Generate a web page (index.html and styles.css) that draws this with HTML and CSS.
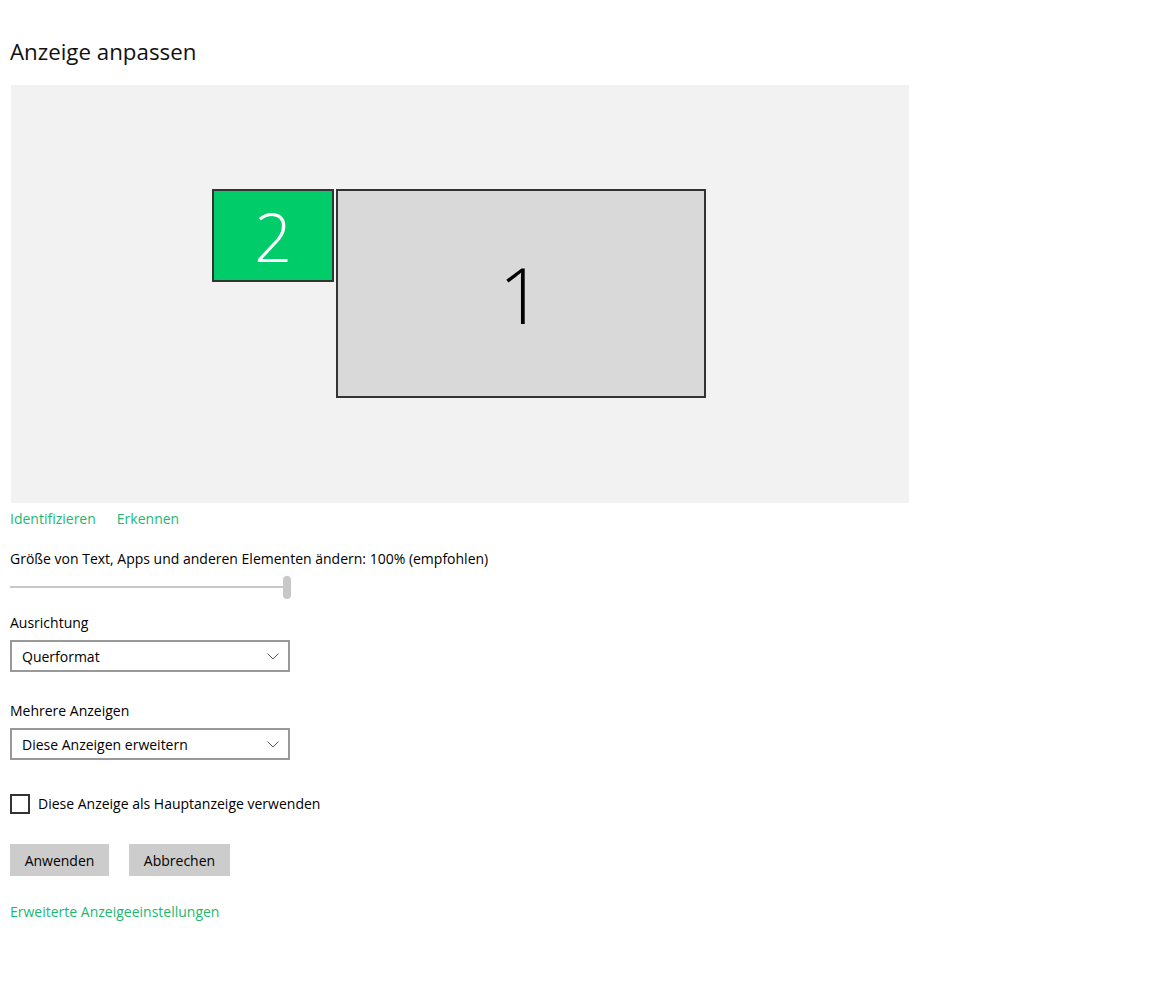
FILE: index.html
```html
<!DOCTYPE html>
<html lang="de">
<head>
<meta charset="utf-8">
<title>Anzeige anpassen</title>
<link rel="stylesheet" href="styles.css">
</head>
<body>
<main class="page">
  <h1 class="title">Anzeige anpassen</h1>
  <div class="preview">
    <div class="monitor monitor-2"><span class="num num-2">2</span></div>
    <div class="monitor monitor-1"><span class="num num-1">1</span></div>
  </div>
  <div class="links">
    <a class="link">Identifizieren</a>
    <a class="link">Erkennen</a>
  </div>
  <div class="label scale-label">Größe von Text, Apps und anderen Elementen ändern: 100% (empfohlen)</div>
  <div class="slider"><div class="track"></div><div class="thumb"></div></div>
  <div class="label label-gap">Ausrichtung</div>
  <div class="select"><span>Querformat</span>
    <svg class="chev" width="12" height="7" viewBox="0 0 12 7"><path d="M0.5 0.5 L6 6 L11.5 0.5" fill="none" stroke="#555" stroke-width="1"/></svg>
  </div>
  <div class="label label-gap2">Mehrere Anzeigen</div>
  <div class="select"><span>Diese Anzeigen erweitern</span>
    <svg class="chev" width="12" height="7" viewBox="0 0 12 7"><path d="M0.5 0.5 L6 6 L11.5 0.5" fill="none" stroke="#555" stroke-width="1"/></svg>
  </div>
  <label class="check"><span class="box"></span><span>Diese Anzeige als Hauptanzeige verwenden</span></label>
  <div class="buttons">
    <button class="btn btn-apply">Anwenden</button>
    <button class="btn btn-cancel">Abbrechen</button>
  </div>
  <a class="link adv">Erweiterte Anzeigeeinstellungen</a>
</main>
</body>
</html>
```
FILE: styles.css
```css
html, body {
  margin: 0;
  padding: 0;
  background: #ffffff;
}
body {
  font-family: "Open Sans", "Noto Sans", "Liberation Sans", sans-serif;
  font-size: 14px;
  color: #000;
}
.page {
  padding: 37px 0 0 10px;
  display: flex;
  flex-direction: column;
  align-items: flex-start;
}
.title {
  margin: 0;
  font-size: 22.3px;
  font-weight: 400;
  line-height: 30px;
  color: #111;
}
.preview {
  position: relative;
  margin: 18px 0 0 1px;
  width: 898px;
  height: 418px;
  background: #f2f2f2;
}
.monitor {
  position: absolute;
  box-sizing: border-box;
  border: 2px solid #333;
  display: flex;
  align-items: center;
  justify-content: center;
}
.monitor-2 {
  left: 201px;
  top: 104px;
  width: 122px;
  height: 93px;
  background: #00cc6a;
}
.monitor-1 {
  left: 325px;
  top: 104px;
  width: 370px;
  height: 209px;
  background: #d9d9d9;
}
.num {
  font-weight: 300;
  line-height: 1;
}
.num-2 {
  color: #fff;
  font-size: 66px;
}
.num-1 {
  color: #000;
  font-size: 78px;
}
.links {
  display: flex;
  gap: 21px;
  margin-top: 6px;
  line-height: 20px;
}
.link {
  color: #1bb970;
  text-decoration: none;
  line-height: 20px;
}
.label {
  line-height: 20px;
}
.scale-label {
  margin-top: 20px;
}
.slider {
  position: relative;
  width: 281px;
  height: 24px;
  margin-top: 7px;
}
.track {
  position: absolute;
  left: 0;
  right: 4px;
  top: 10px;
  height: 2px;
  background: #c8c8c8;
}
.thumb {
  position: absolute;
  right: 0;
  top: 0;
  width: 8px;
  height: 23px;
  border-radius: 4px;
  background: #c8c8c8;
}
.label-gap {
  margin-top: 13px;
}
.label-gap2 {
  margin-top: 29px;
}
.select {
  box-sizing: border-box;
  width: 280px;
  height: 32px;
  margin-top: 7px;
  border: 2px solid #999;
  display: flex;
  align-items: center;
  justify-content: space-between;
  padding: 0 9px 0 10px;
}
.chev {
  display: block;
}
.check {
  display: flex;
  align-items: center;
  gap: 8px;
  margin-top: 34px;
  line-height: 20px;
}
.box {
  box-sizing: border-box;
  width: 20px;
  height: 20px;
  border: 2px solid #333;
}
.buttons {
  display: flex;
  gap: 20px;
  margin-top: 30px;
}
.btn {
  font-family: inherit;
  font-size: 14px;
  border: none;
  background: #cccccc;
  height: 32px;
  padding: 0;
  color: #000;
}
.btn-apply {
  width: 99px;
}
.btn-cancel {
  width: 101px;
}
.adv {
  margin-top: 26px;
}
```
